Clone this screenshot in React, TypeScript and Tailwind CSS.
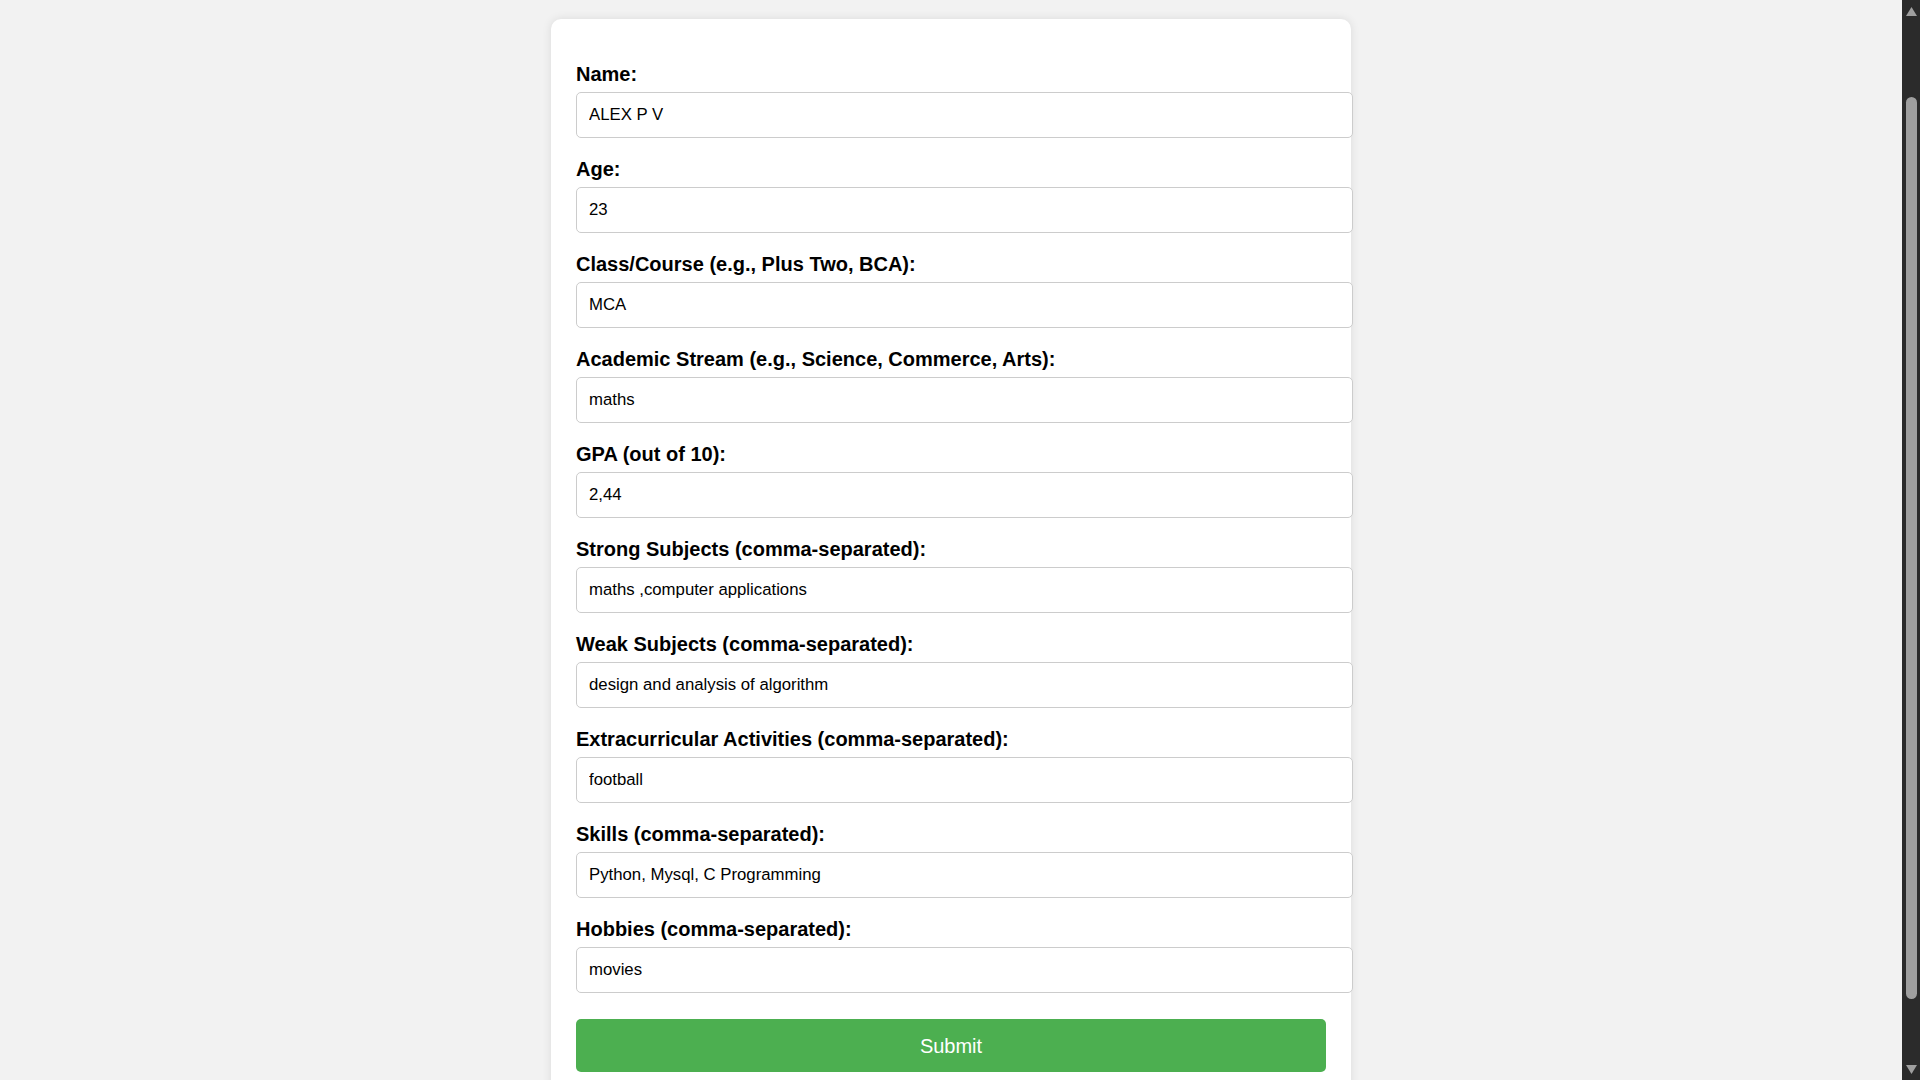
const fields = [
  { label: "Name:", value: "ALEX P V" },
  { label: "Age:", value: "23" },
  { label: "Class/Course (e.g., Plus Two, BCA):", value: "MCA" },
  { label: "Academic Stream (e.g., Science, Commerce, Arts):", value: "maths" },
  { label: "GPA (out of 10):", value: "2,44" },
  { label: "Strong Subjects (comma-separated):", value: "maths ,computer applications" },
  { label: "Weak Subjects (comma-separated):", value: "design and analysis of algorithm" },
  { label: "Extracurricular Activities (comma-separated):", value: "football" },
  { label: "Skills (comma-separated):", value: "Python, Mysql, C Programming" },
  { label: "Hobbies (comma-separated):", value: "movies" },
];

const App = () => {
  return (
    <div className="flex h-screen w-full overflow-hidden bg-[#f2f2f2] font-['Liberation_Sans',Arial,sans-serif]">
      <div className="flex flex-1 items-start justify-center overflow-hidden pt-[19px]">
        <form className="w-[800px] shrink-0 rounded-[10px] bg-white pt-[44px] pr-6 pb-6 pl-[25px] shadow-[0_0_10px_rgba(0,0,0,0.1)]">
          {fields.map((f) => (
            <div key={f.label} className="mb-[20px]">
              <label className="mb-[6px] block text-[20px] leading-[23px] font-bold text-black">
                {f.label}
              </label>
              <input
                type="text"
                defaultValue={f.value}
                className="block h-[46px] w-[777px] rounded-[5px] border border-[#cccccc] bg-white px-3 text-[16.75px] text-black outline-none"
              />
            </div>
          ))}
          <button
            type="button"
            className="mt-[6px] h-[53px] w-[750px] rounded-[5px] bg-[#4caf50] text-[20px] text-white"
          >
            Submit
          </button>
        </form>
      </div>

      {/* scrollbar */}
      <div className="flex w-[18px] shrink-0 flex-col items-center bg-[#2b2b2b]">
        <svg width="11" height="9" viewBox="0 0 11 9" className="mt-[7px]">
          <polygon points="5.5,0 11,9 0,9" fill="#9f9f9f" />
        </svg>
        <div className="mt-[81px] h-[902px] w-[11px] rounded-full bg-[#9f9f9f]" />
        <div className="flex-1" />
        <svg width="11" height="9" viewBox="0 0 11 9" className="mb-[6px]">
          <polygon points="0,0 11,0 5.5,9" fill="#9f9f9f" />
        </svg>
      </div>
    </div>
  );
};

export default App;
